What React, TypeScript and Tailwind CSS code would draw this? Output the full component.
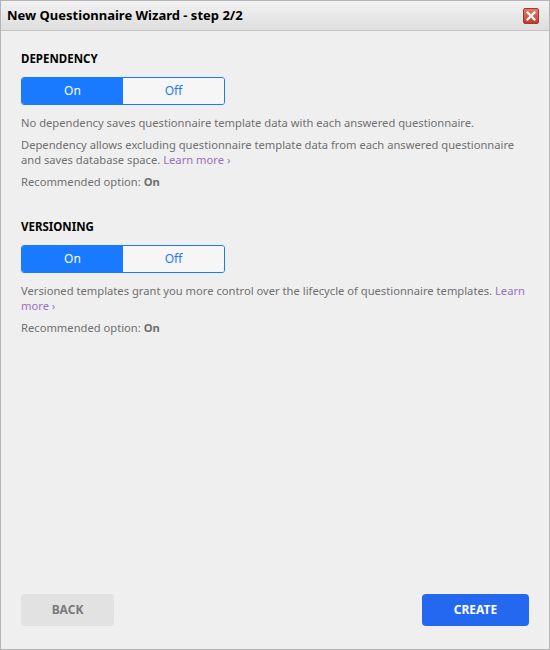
const font = { fontFamily: '"Noto Sans", "Open Sans", sans-serif' };

const Toggle = () => {
  return (
    <div className="flex w-[204px] h-[28px] rounded-[3px] border border-[#1a7aff] overflow-hidden text-[12px]">
      <div className="flex-1 flex items-center justify-center bg-[#1a7aff] text-white">On</div>
      <div className="flex-1 flex items-center justify-center bg-[#f6f6f6] text-[#1a7aff]">Off</div>
    </div>
  );
};

const LearnMore = () => <span className="text-[#9a6fc0]">Learn more ›</span>;

const App = () => {
  return (
    <div style={font} className="w-[550px] h-[650px] flex flex-col border border-[#b4b4b4] bg-[#efefef]">
      <div className="h-[30px] flex items-center justify-between px-[6px] bg-gradient-to-b from-[#f2f2f2] to-[#dedede] border-b border-[#c2c2c2]">
        <div className="text-[13px] font-bold text-black">New Questionnaire Wizard - step 2/2</div>
        <div className="w-[16px] h-[16px] mr-[4px] rounded-[2px] border border-[#9a3a30] bg-gradient-to-b from-[#e87a68] to-[#c33a2a] flex items-center justify-center">
          <svg width="10" height="10" viewBox="0 0 10 10">
            <path d="M1.5 1.5 L8.5 8.5 M8.5 1.5 L1.5 8.5" stroke="white" strokeWidth="2.2" strokeLinecap="square" />
          </svg>
        </div>
      </div>
      <div className="flex-1 flex flex-col pl-[20px] pr-[18px] pt-[20px] pb-[23px]">
        <div className="text-[11.5px] font-bold text-black leading-[16px]">DEPENDENCY</div>
        <div className="mt-[10px]">
          <Toggle />
        </div>
        <div className="mt-[10px] text-[11.2px] leading-[15px] text-[#707070]">
          No dependency saves questionnaire template data with each answered questionnaire.
        </div>
        <div className="mt-[7px] text-[11.2px] leading-[15px] text-[#707070]">
          Dependency allows excluding questionnaire template data from each answered questionnaire and saves database space. <LearnMore />
        </div>
        <div className="mt-[7px] text-[11.2px] leading-[15px] text-[#707070]">
          Recommended option: <span className="font-bold">On</span>
        </div>
        <div className="mt-[30px] text-[11.5px] font-bold text-black leading-[16px]">VERSIONING</div>
        <div className="mt-[10px]">
          <Toggle />
        </div>
        <div className="mt-[10px] text-[11.2px] leading-[15px] text-[#707070]">
          Versioned templates grant you more control over the lifecycle of questionnaire templates. <LearnMore />
        </div>
        <div className="mt-[7px] text-[11.2px] leading-[15px] text-[#707070]">
          Recommended option: <span className="font-bold">On</span>
        </div>
        <div className="mt-auto flex justify-between pr-[2px]">
          <button className="w-[93px] h-[32px] rounded-[4px] bg-[#e2e2e2] text-[#7a7a7a] text-[12px] font-bold">BACK</button>
          <button className="w-[107px] h-[32px] rounded-[4px] bg-[#2368ee] text-white text-[12px] font-bold">CREATE</button>
        </div>
      </div>
    </div>
  );
};

export default App;
